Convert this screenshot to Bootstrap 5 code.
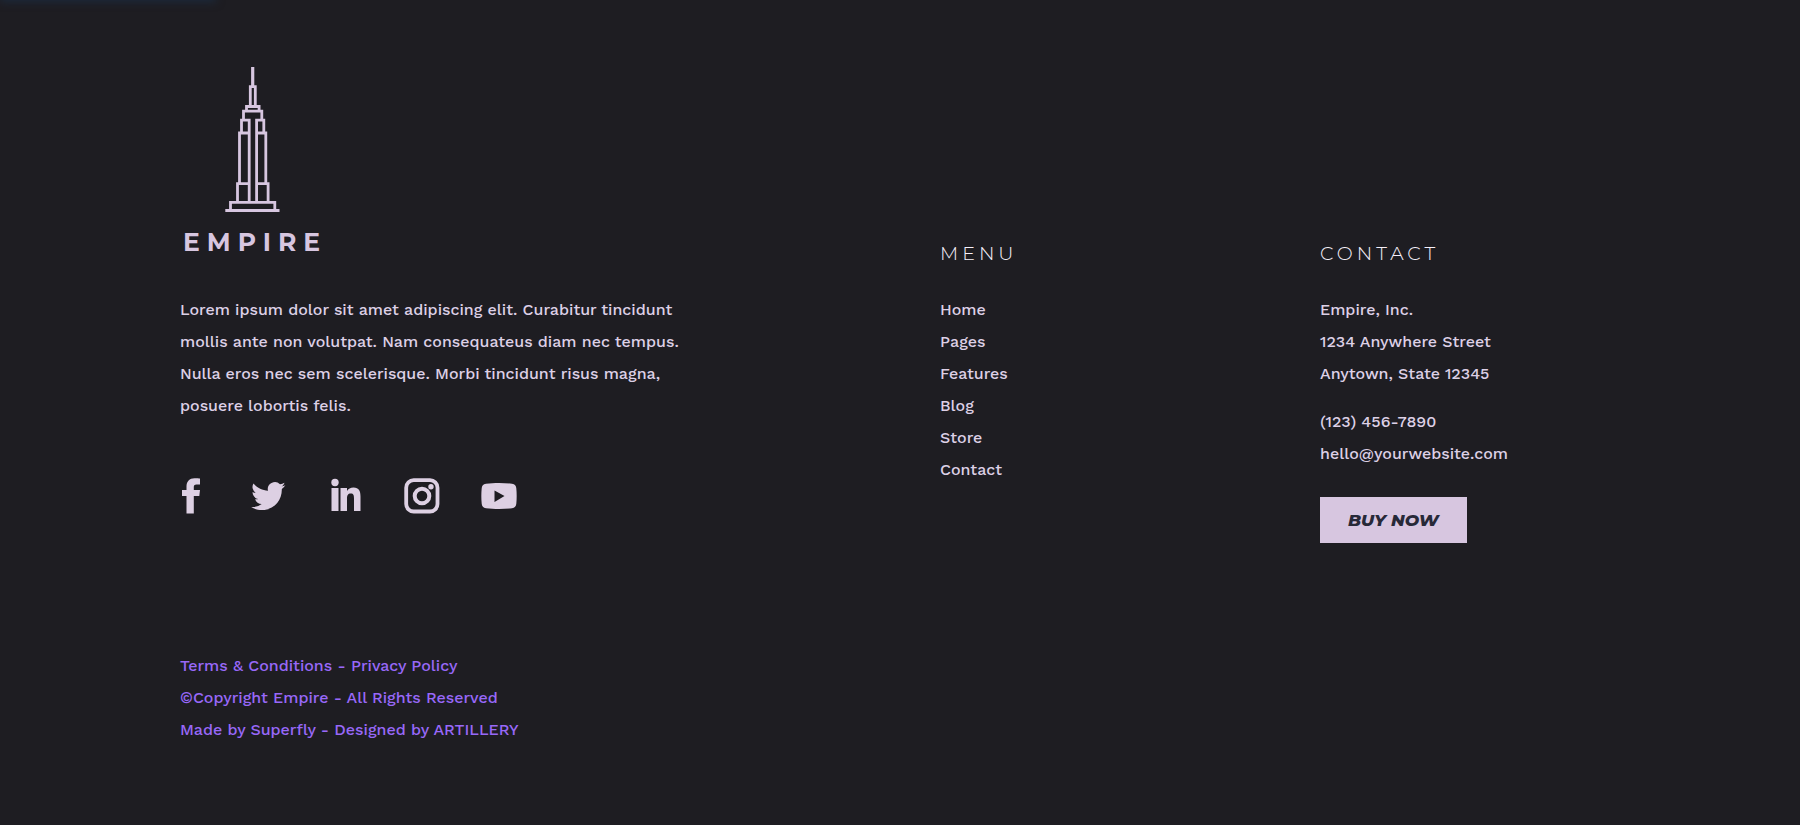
<!DOCTYPE html>
<html lang="en">
<head>
<meta charset="utf-8">
<meta name="viewport" content="width=device-width, initial-scale=1">
<title>Empire</title>
<link href="https://cdn.jsdelivr.net/npm/bootstrap@5.3.0/dist/css/bootstrap.min.css" rel="stylesheet">
<style>
  :root { --ink: #1e1d22; --lilac: #d7c6e0; --violet: #9868f8; }
  body { background: var(--ink); color: #ddd0e6; font: 500 16px/32px "Work Sans", Inter, "Liberation Sans", sans-serif; }
  a { color: inherit; text-decoration: none; }
  a:hover { color: #fff; }
  .site-footer { width: 80%; padding: 64px 0 72px; }
  .site-footer .row { --bs-gutter-x: 80px; }
  .glow { position: absolute; top: -10px; left: 0; width: 216px; height: 10px; box-shadow: 0 2px 8px #1c2a3c; }
  .brand { width: 152px; }
  .brand text { font: 700 25px Montserrat, Inter, sans-serif; letter-spacing: 7px; }
  .side-col { padding-top: 174px; }
  .footer-title { font: 300 19px/32px Montserrat, Lato, sans-serif; letter-spacing: 4px; color: #f6f0fa; margin: 0 0 24px; }
  .blurb { margin: 38px 0 56px; }
  .place { line-height: inherit; }
  .social { gap: 41px; color: #ddd0e3; }
  .social svg { display: block; fill: currentColor; }
  .buy-btn { display: block; margin-top: 27px; padding: 0 28px; height: 46px; border: 0; border-radius: 0; background: var(--lilac); color: #272938; font: italic 800 17px/46px Montserrat, Inter, sans-serif; }
  .legal { margin-top: 107px; color: var(--violet); }
</style>
</head>
<body>
<div class="glow"></div>
<footer class="site-footer mx-auto">
  <div class="row align-items-start">
    <div class="col-6">
      <a href="#" class="brand d-block" aria-label="Empire">
        <svg class="d-block" width="152" height="192" viewBox="0 0 152 192">
          <g fill="none" stroke="#d7c6e0" stroke-width="2.800">
            <path d="M72.700 3v19" stroke-width="3.200"/>
            <path d="M70.300 42V22.700h5V42M66.500 46v-3.500h12.600V46M63.500 56v-8.900h18.300V56M61.500 68V56.200h7.700V139M83.800 68V56.200h-7.200V139M59.500 119V69h9.700M85.800 119V69h-9.200M57.500 138v-18.300h11.700M88.100 138v-18.300H76.600M50.500 146v-7.600h44.300V146M45.300 146.500h54.200"/>
          </g>
          <text x="3" y="187" fill="#d7c6e0">EMPIRE</text>
        </svg>
      </a>
      <p class="blurb">Lorem ipsum dolor sit amet adipiscing elit. Curabitur tincidunt<br>mollis ante non volutpat. Nam consequateus diam nec tempus.<br>Nulla eros nec sem scelerisque. Morbi tincidunt risus magna,<br>posuere lobortis felis.</p>
      <nav class="social d-flex" aria-label="Social">
        <a href="#" aria-label="Facebook"><svg width="29" height="36" viewBox="0 0 29 36"><path d="M20 .5v6h-3.500c-2.200 0-2.700 1-2.700 2.800V12H20l-.7 6h-5.500v17.500H6.500V18H2v-6h4.500V8.500C6.500 3.500 9.500.3 14.500.3c2.500 0 4.500.1 5.500.2z"/></svg></a>
        <a href="#" aria-label="Twitter"><svg width="36" height="36" viewBox="0 0 24 24"><path d="M23.600 4.900c-.8.400-1.700.6-2.700.8 1-.6 1.700-1.500 2.100-2.600-.9.500-1.900.9-3 1.100A4.700 4.700 0 0 0 12 8.500c-3.900-.2-7.400-2.100-9.700-4.900a4.700 4.700 0 0 0 1.500 6.300c-.8 0-1.500-.2-2.100-.6v.1c0 2.300 1.600 4.200 3.800 4.600-.7.200-1.400.2-2.100.1.600 1.900 2.300 3.200 4.400 3.200A9.500 9.500 0 0 1 .8 19.300C2.900 20.700 5.400 21.400 8 21.400c8.700 0 13.500-7.200 13.200-14.100.9-.7 1.800-1.500 2.400-2.400z"/></svg></a>
        <a href="#" aria-label="LinkedIn"><svg width="36" height="36" viewBox="0 0 36 36"><circle cx="8" cy="4.500" r="3.700"/><path d="M4.500 10h7v23h-7zM13.500 10h6.500v3c1.200-2.100 3.500-3.500 6.500-3.500 5.500 0 7 3.500 7 9V33h-6.500V20.500c0-3-.4-5-3.200-5-2.900 0-3.800 2-3.800 5V33h-6.500z"/></svg></a>
        <a href="#" aria-label="Instagram"><svg width="36" height="36" viewBox="0 0 36 36"><rect x="2.200" y="2.200" width="31.300" height="31.300" rx="7.500" fill="none" stroke="currentColor" stroke-width="3.800"/><circle cx="18" cy="18" r="7.300" fill="none" stroke="currentColor" stroke-width="4"/><circle cx="27" cy="8.800" r="2.700"/></svg></a>
        <a href="#" aria-label="YouTube"><svg width="36" height="36" viewBox="0 0 36 36"><path fill-rule="evenodd" d="M5 5.800c8-1.100 18-1.100 26 0 3 .4 4 2 4.300 4.500.5 5 .5 10.500 0 15.500-.3 2.600-1.500 4-4.300 4.400-8 .9-18 .9-26 0-2.800-.4-4-1.800-4.300-4.400-.5-5-.5-10.500 0-15.500C1 7.800 2 6.200 5 5.800zM13.500 12.500v11.500L23.500 18z"/></svg></a>
      </nav>
    </div>
    <div class="col-3 side-col">
      <h2 class="footer-title">MENU</h2>
      <ul class="list-unstyled mb-0">
        <li><a href="#">Home</a></li>
        <li><a href="#">Pages</a></li>
        <li><a href="#">Features</a></li>
        <li><a href="#">Blog</a></li>
        <li><a href="#">Store</a></li>
        <li><a href="#">Contact</a></li>
      </ul>
    </div>
    <div class="col-3 side-col">
      <h2 class="footer-title">CONTACT</h2>
      <address class="place mb-3">Empire, Inc.<br>1234 Anywhere Street<br>Anytown, State 12345</address>
      <p class="mb-0">(123) 456-7890<br><a href="#">hello@yourwebsite.com</a></p>
      <button type="button" class="buy-btn">BUY NOW</button>
    </div>
  </div>
  <div class="legal">
    <a href="#">Terms &amp; Conditions</a> - <a href="#">Privacy Policy</a><br>
    ©Copyright Empire - All Rights Reserved<br>
    Made by <a href="#">Superfly</a> - Designed by <a href="#">ARTILLERY</a>
  </div>
</footer>
<script src="https://cdn.jsdelivr.net/npm/bootstrap@5.3.0/dist/js/bootstrap.bundle.min.js"></script>
</body>
</html>
